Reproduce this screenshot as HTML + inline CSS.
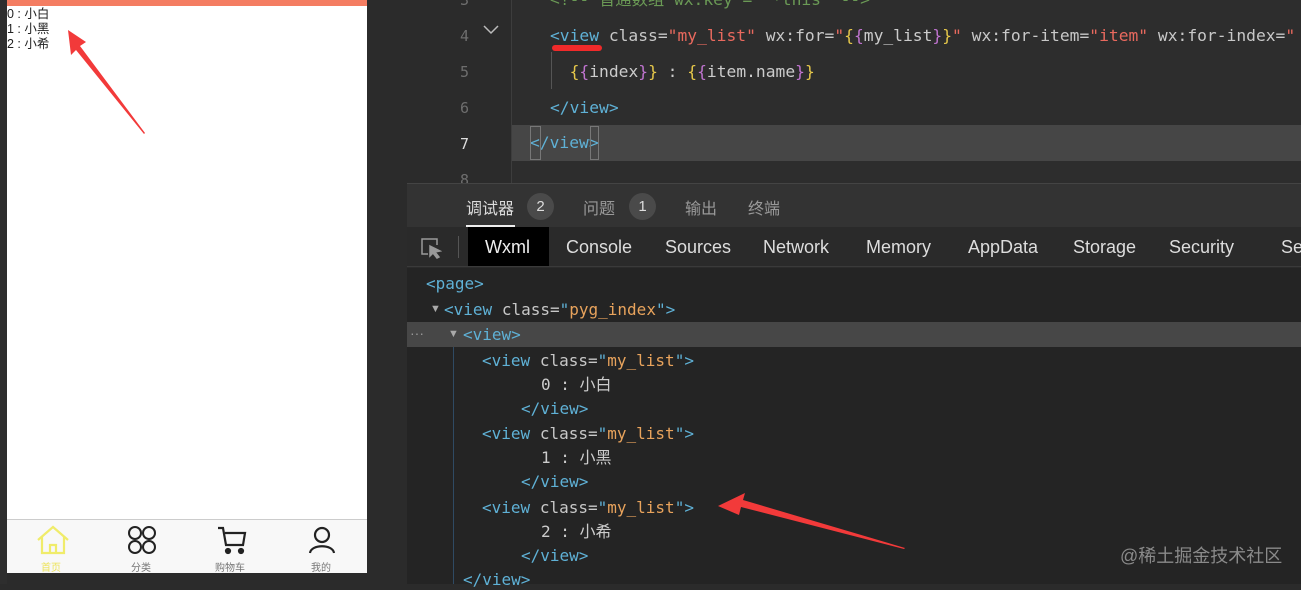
<!DOCTYPE html>
<html><head><meta charset="utf-8"><style>
*{margin:0;padding:0;box-sizing:border-box}
body{width:1301px;height:584px;background:#2b2b2b;position:relative;overflow:hidden;font-family:"Liberation Sans","Noto Sans CJK SC",sans-serif}
.a{position:absolute;white-space:pre}
.mono{font-family:"DejaVu Sans Mono","Liberation Mono","Noto Sans CJK SC",monospace}
.t{position:absolute;white-space:pre;font-family:"DejaVu Sans Mono","Liberation Mono","Noto Sans CJK SC",monospace;font-size:16px;line-height:20px;color:#ccc}
.tg{color:#5fb1d6}.at{color:#c8c8c8}.st{color:#e9695e}.br{color:#e6c84a}.pu{color:#c074d0}.or{color:#e8a35c}
</style></head><body>
<!-- phone -->
<div class="a" style="left:0;top:0;width:7px;height:584px;background:#2e2e2e"></div>
<div class="a" style="left:7px;top:0;width:360px;height:573px;background:#fff"></div>
<div class="a" style="left:7px;top:0;width:360px;height:6px;background:#f47d62"></div>
<div class="a" style="left:7px;top:7px;font-size:12.5px;line-height:15px;color:#222">0 : 小白
1 : 小黑
2 : 小希</div>
<svg class="a" style="left:60px;top:25px" width="100" height="115"><polygon points="8,5 26,17 20,21 85,108 84,109 16,25 11,30" fill="#f23a3a"/></svg>
<div class="a" style="left:7px;top:519px;width:360px;height:54px;background:#f8f8f8;border-top:1px solid #ccc"></div>
<svg class="a" style="left:36px;top:525px" width="34" height="30" fill="none" stroke="#f0ec6a" stroke-width="2.2"><path d="M2 15 L17 2 L32 15 M6 12 V28 H28 V12 M14 28 V20 H20 V28"/></svg>
<svg class="a" style="left:127px;top:526px" width="30" height="28" fill="none" stroke="#222" stroke-width="2"><circle cx="8" cy="7" r="6"/><circle cx="22" cy="7" r="6"/><circle cx="8" cy="21" r="6"/><circle cx="22" cy="21" r="6"/></svg>
<svg class="a" style="left:216px;top:525px" width="32" height="30" fill="none" stroke="#222" stroke-width="2.2"><path d="M2 3 H7 L10 20 H27 L29 8 H9"/><circle cx="12" cy="26" r="2" fill="#222"/><circle cx="25" cy="26" r="2" fill="#222"/></svg>
<svg class="a" style="left:308px;top:526px" width="28" height="28" fill="none" stroke="#222" stroke-width="2.2"><circle cx="14" cy="9" r="7"/><path d="M2 27 C3 18 25 18 26 27"/></svg>
<div class="a" style="left:41px;top:559px;font-size:10px;color:#ede35a">首页</div>
<div class="a" style="left:131px;top:559px;font-size:10px;color:#777">分类</div>
<div class="a" style="left:215px;top:559px;font-size:10px;color:#777">购物车</div>
<div class="a" style="left:311px;top:559px;font-size:10px;color:#777">我的</div>
<!-- editor -->
<div class="a" style="left:404px;top:0;width:897px;height:183px;background:#2d2d2d"></div>
<div class="a" style="left:404px;top:0;width:108px;height:183px;background:#2b2b2b"></div>
<div class="a" style="left:511px;top:0;width:1px;height:183px;background:#3d3d3d"></div>
<div class="a" style="left:512px;top:125px;width:789px;height:36px;background:#464646"></div>
<div class="a mono" style="left:460px;top:-18px;font-size:15px;line-height:36px;color:#6e6e6e">3
4
5
6
<span style="color:#ddd">7</span>
8</div>
<svg class="a" style="left:483px;top:25px" width="16" height="10" fill="none" stroke="#bbb" stroke-width="1.5"><path d="M1 1 L8 8 L15 1"/></svg>
<div class="a mono" style="left:550px;top:-18px;font-size:16.3px;line-height:36px;color:#ccc"><span style="color:#6a9955">&lt;!-- 普通数组 wx:key = "*this" --&gt;</span>
<span class="tg">&lt;view</span> <span class="at">class=</span><span class="st">"my_list"</span> <span class="at">wx:for=</span><span class="st">"</span><span class="br">{</span><span class="pu">{</span>my_list<span class="pu">}</span><span class="br">}</span><span class="st">"</span> <span class="at">wx:for-item=</span><span class="st">"item"</span> <span class="at">wx:for-index=</span><span class="st">"</span>
  <span class="br">{</span><span class="pu">{</span>index<span class="pu">}</span><span class="br">}</span> : <span class="br">{</span><span class="pu">{</span>item.name<span class="pu">}</span><span class="br">}</span>
<span class="tg">&lt;/view&gt;</span></div>
<div class="a mono tg" style="left:530px;top:125px;font-size:16.3px;line-height:36px">&lt;/view&gt;</div>
<div class="a" style="left:530px;top:126px;width:11px;height:34px;border:1px solid #777"></div>
<div class="a" style="left:590px;top:126px;width:9px;height:34px;border:1px solid #777"></div>
<div class="a" style="left:552px;top:45px;width:50px;height:6px;border-radius:3px;background:#f02a2a"></div>
<div class="a" style="left:551px;top:52px;width:1px;height:37px;background:#555"></div>
<!-- panel -->
<div class="a" style="left:407px;top:183px;width:894px;height:44px;background:#333;border-top:1px solid #444"></div>
<div class="a" style="left:466px;top:195px;font-size:16px;color:#ddd">调试器</div>
<div class="a" style="left:466px;top:225px;width:49px;height:2px;background:#eee"></div>
<div class="a" style="left:527px;top:193px;width:27px;height:27px;border-radius:50%;background:#4a4a4a;color:#ddd;font-size:15px;text-align:center;line-height:27px">2</div>
<div class="a" style="left:583px;top:195px;font-size:16px;color:#999">问题</div>
<div class="a" style="left:629px;top:193px;width:27px;height:27px;border-radius:50%;background:#4a4a4a;color:#ddd;font-size:15px;text-align:center;line-height:27px">1</div>
<div class="a" style="left:685px;top:195px;font-size:16px;color:#999">输出</div>
<div class="a" style="left:748px;top:195px;font-size:16px;color:#999">终端</div>
<div class="a" style="left:407px;top:227px;width:894px;height:40px;background:#2a2a2a;border-bottom:1px solid #3a3a3a"></div>
<svg class="a" style="left:420px;top:237px" width="22" height="22" fill="none" stroke="#999" stroke-width="1.5"><path d="M8 17 H2 V2 H17 V8"/><path d="M10 9 L20 14 L15 15 L19 20 L17 21 L13 16 L10 19 Z" fill="#999"/></svg>
<div class="a" style="left:458px;top:236px;width:1px;height:22px;background:#555"></div>
<div class="a" style="left:468px;top:227px;width:81px;height:39px;background:#000"></div>
<div class="a" style="left:485px;top:237px;font-size:18px;color:#eee">Wxml</div>
<div class="a" style="left:566px;top:237px;font-size:18px;color:#ddd">Console</div>
<div class="a" style="left:665px;top:237px;font-size:18px;color:#ddd">Sources</div>
<div class="a" style="left:763px;top:237px;font-size:18px;color:#ddd">Network</div>
<div class="a" style="left:866px;top:237px;font-size:18px;color:#ddd">Memory</div>
<div class="a" style="left:968px;top:237px;font-size:18px;color:#ddd">AppData</div>
<div class="a" style="left:1073px;top:237px;font-size:18px;color:#ddd">Storage</div>
<div class="a" style="left:1169px;top:237px;font-size:18px;color:#ddd">Security</div>
<div class="a" style="left:1281px;top:237px;font-size:18px;color:#ddd">Se</div>
<div class="a" style="left:407px;top:268px;width:894px;height:316px;background:#242424"></div>
<div class="a" style="left:407px;top:322px;width:894px;height:25px;background:#474747"></div>
<div class="a" style="left:453px;top:347px;width:1px;height:237px;background:#2f4a63"></div>
<div class="a" style="left:410px;top:325px;font-size:14px;color:#999">···</div>
<div class="a" style="left:430px;top:303px;font-size:11px;color:#aaa">▼</div>
<div class="a" style="left:448px;top:328px;font-size:11px;color:#aaa">▼</div>
<div class="t tg" style="left:426px;top:274px">&lt;page&gt;</div>
<div class="t" style="left:444px;top:300px"><span class="tg">&lt;view</span> <span class="at">class=</span><span class="tg">"</span><span class="or">pyg_index</span><span class="tg">"&gt;</span></div>
<div class="t tg" style="left:463px;top:325px">&lt;view&gt;</div>
<div class="t" style="left:482px;top:351px"><span class="tg">&lt;view</span> <span class="at">class=</span><span class="tg">"</span><span class="or">my_list</span><span class="tg">"&gt;</span></div>
<div class="t" style="left:541px;top:375px">0 : 小白</div>
<div class="t tg" style="left:521px;top:399px">&lt;/view&gt;</div>
<div class="t" style="left:482px;top:424px"><span class="tg">&lt;view</span> <span class="at">class=</span><span class="tg">"</span><span class="or">my_list</span><span class="tg">"&gt;</span></div>
<div class="t" style="left:541px;top:448px">1 : 小黑</div>
<div class="t tg" style="left:521px;top:472px">&lt;/view&gt;</div>
<div class="t" style="left:482px;top:498px"><span class="tg">&lt;view</span> <span class="at">class=</span><span class="tg">"</span><span class="or">my_list</span><span class="tg">"&gt;</span></div>
<div class="t" style="left:541px;top:522px">2 : 小希</div>
<div class="t tg" style="left:521px;top:546px">&lt;/view&gt;</div>
<div class="t tg" style="left:463px;top:570px">&lt;/view&gt;</div>
<svg class="a" style="left:715px;top:490px" width="200" height="70"><polygon points="3,16 30,3 28,10 190,58 189,59 26,17 24,25" fill="#f23a3a"/></svg>
<div class="a" style="left:1120px;top:542px;font-size:18px;color:#8a8a8a">@稀土掘金技术社区</div>
</body></html>
